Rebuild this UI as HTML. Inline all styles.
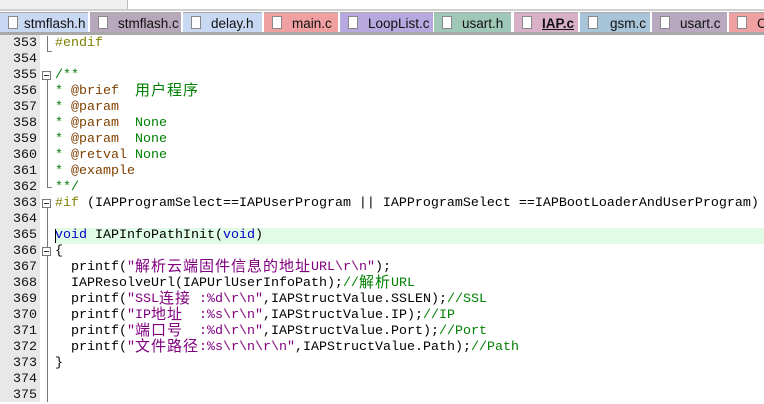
<!DOCTYPE html>
<html><head><meta charset="utf-8"><style>
body{margin:0;width:764px;height:402px;overflow:hidden;background:#fff;position:relative;font-family:"Liberation Mono","Noto Sans CJK SC",monospace;}
.tb{position:absolute;left:0;top:0;width:127px;height:9px;background:#f0f0f0;border-right:1px solid #bbb;}
.tl{position:absolute;left:0;top:9px;width:764px;height:2px;background:#d0d0d0;}
.tab{position:absolute;top:12px;height:21px;font:13.5px "Liberation Sans",sans-serif;color:#111;line-height:21px;box-sizing:border-box;border-top:1px solid #aaa;overflow:hidden;white-space:nowrap;}
.tab i{position:absolute;left:8px;top:3px;width:10px;height:13px;background:#fff;border:1px solid #888;box-sizing:border-box;}
.tab span{position:absolute;left:28px;}
.bl{position:absolute;left:0;top:32px;width:764px;height:3px;background:#a8a8a8;}
.g{position:absolute;left:0;top:35px;width:40px;height:367px;background:#e8e8e8;}
.ln{position:absolute;left:0;width:37px;text-align:right;font-size:13.33px;color:#111;line-height:16px;}
.c{position:absolute;left:55px;top:36px;font-size:13.33px;color:#000;}
.c div{height:16px;line-height:16px;white-space:pre;overflow:visible;}
.vl{position:absolute;left:47px;width:1px;background:#777;}
.fb{position:absolute;left:42px;width:9px;height:9px;border:1px solid #777;box-sizing:border-box;background:#fff;}
.fb:after{content:"";position:absolute;left:1px;top:3px;width:5px;height:1px;background:#333;}
.cm{color:#008000}.dt{color:#804000}.pp{color:#808000}.kw{color:#0000c8}.st{color:#800080}
.j{font-family:"Noto Sans CJK SC",sans-serif;font-size:15px;letter-spacing:1px;display:inline-block;height:16px;line-height:16px;vertical-align:top;position:relative;top:-2px;}
</style></head><body>
<div class="tb"></div><div class="tl"></div>
<div class="tab" style="left:0;width:88px;background:#c8d8f2"><i></i><span style="left:24px">stmflash.h</span></div>
<div class="tab" style="left:90px;width:91px;background:#b8a8bc"><i></i><span>stmflash.c</span></div>
<div class="tab" style="left:183px;width:79px;background:#c8d8f2"><i></i><span>delay.h</span></div>
<div class="tab" style="left:264px;width:74px;background:#f0a0a0"><i></i><span>main.c</span></div>
<div class="tab" style="left:340px;width:93px;background:#b8a8e0"><i></i><span>LoopList.c</span></div>
<div class="tab" style="left:434px;width:77px;background:#a0c8b8"><i></i><span>usart.h</span></div>
<div class="tab" style="left:514px;width:64px;background:#d8b0c8"><i></i><span style="left:28px;text-decoration:underline;font-weight:bold">IAP.c</span></div>
<div class="tab" style="left:580px;width:70px;background:#a8c4d8"><i></i><span style="left:30px">gsm.c</span></div>
<div class="tab" style="left:652px;width:75px;background:#b8a8c0"><i></i><span>usart.c</span></div>
<div class="tab" style="left:729px;width:40px;background:#f0a0a0"><i></i><span>C</span></div>
<div class="bl"></div>
<div class="g"></div>
<div style="position:absolute;left:55px;top:228px;width:709px;height:16px;background:#e0fbe6"></div>
<div style="position:absolute;left:55px;top:229px;width:1px;height:14px;background:#000"></div>
<div class="vl" style="top:36px;height:16px"></div><div style="position:absolute;left:47px;top:51px;width:5px;height:1px;background:#777"></div>
<div class="fb" style="top:71px"></div><div class="vl" style="top:80px;height:108px"></div><div style="position:absolute;left:47px;top:187px;width:5px;height:1px;background:#777"></div>
<div class="fb" style="top:199px"></div><div class="vl" style="top:208px;height:40px"></div>
<div class="fb" style="top:247px"></div><div class="vl" style="top:256px;height:146px"></div>
<div class="ln" style="top:36px">353<br>354<br>355<br>356<br>357<br>358<br>359<br>360<br>361<br>362<br>363<br>364<br>365<br>366<br>367<br>368<br>369<br>370<br>371<br>372<br>373<br>374<br>375</div>
<div class="c">
<div><span class="pp">#endif</span></div>
<div></div>
<div><span class="cm">/**</span></div>
<div><span class="cm">* </span><span class="dt">@brief</span><span class="cm">  <span class="j">用户程序</span></span></div>
<div><span class="cm">* </span><span class="dt">@param</span></div>
<div><span class="cm">* </span><span class="dt">@param</span><span class="cm">  None</span></div>
<div><span class="cm">* </span><span class="dt">@param</span><span class="cm">  None</span></div>
<div><span class="cm">* </span><span class="dt">@retval</span><span class="cm"> None</span></div>
<div><span class="cm">* </span><span class="dt">@example</span></div>
<div><span class="cm">**/</span></div>
<div><span class="pp">#if</span> (IAPProgramSelect==IAPUserProgram || IAPProgramSelect ==IAPBootLoaderAndUserProgram)</div>
<div></div>
<div><span class="kw">void</span> IAPInfoPathInit(<span class="kw">void</span>)</div>
<div>{</div>
<div>  printf(<span class="st">"<span class="j">解析云端固件信息的地址</span>URL\r\n"</span>);</div>
<div>  IAPResolveUrl(IAPUrlUserInfoPath);<span class="cm">//<span class="j">解析</span>URL</span></div>
<div>  printf(<span class="st">"SSL<span class="j">连接</span> :%d\r\n"</span>,IAPStructValue.SSLEN);<span class="cm">//SSL</span></div>
<div>  printf(<span class="st">"IP<span class="j">地址</span>  :%s\r\n"</span>,IAPStructValue.IP);<span class="cm">//IP</span></div>
<div>  printf(<span class="st">"<span class="j">端口号</span>  :%d\r\n"</span>,IAPStructValue.Port);<span class="cm">//Port</span></div>
<div>  printf(<span class="st">"<span class="j">文件路径</span>:%s\r\n\r\n"</span>,IAPStructValue.Path);<span class="cm">//Path</span></div>
<div>}</div>
</div>
</body></html>
